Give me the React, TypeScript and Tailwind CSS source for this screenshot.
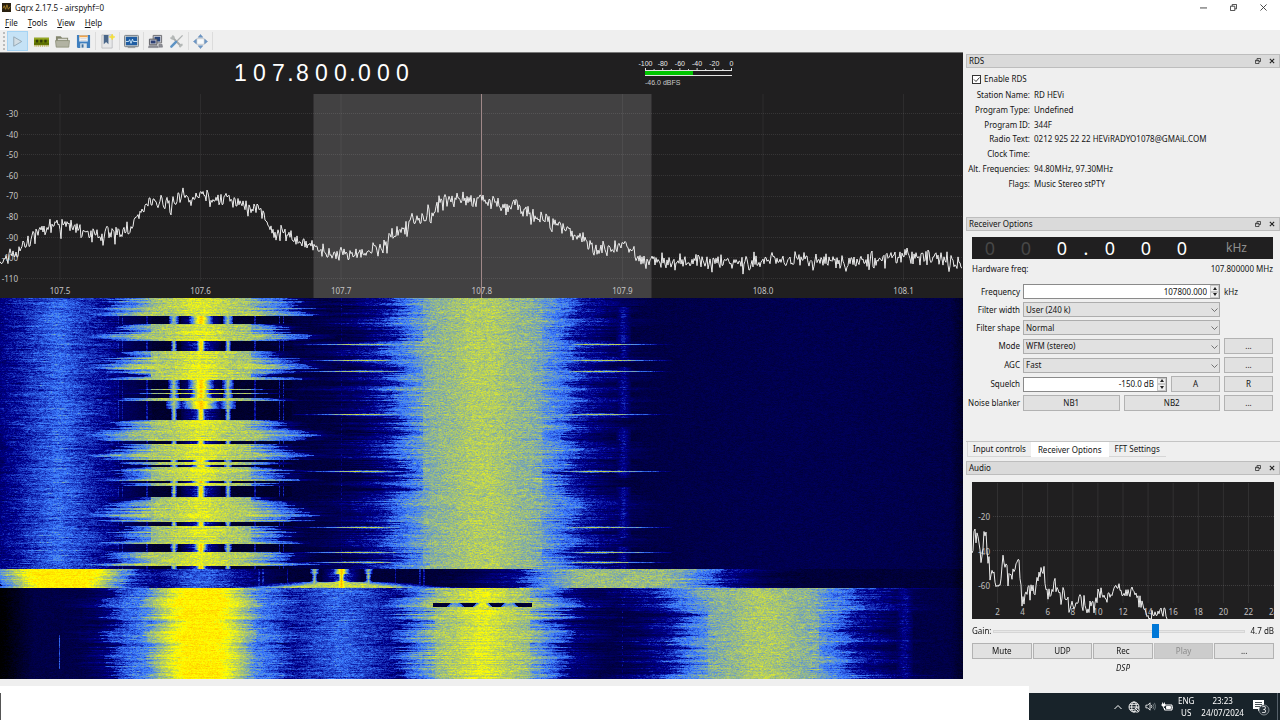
import { useLayoutEffect, useRef } from "react";
import type { ReactNode } from "react";

/* ---------- helpers ---------- */

function makeRandom(seed: number) {
  let a = seed;
  return () => {
    a = (a + 0x6d2b79f5) | 0;
    let t = Math.imul(a ^ (a >>> 15), 1 | a);
    t = (t + Math.imul(t ^ (t >>> 7), 61 | t)) ^ t;
    return ((t ^ (t >>> 14)) >>> 0) / 4294967296;
  };
}

type Point = [number, number];

function trace(points: Point[], noise: number, seed: number) {
  const rnd = makeRandom(seed);
  const out: string[] = [];
  for (let i = 0; i < points.length - 1; i++) {
    const [x0, y0] = points[i];
    const [x1, y1] = points[i + 1];
    for (let x = x0; x < x1; x++) {
      const y = y0 + ((y1 - y0) * (x - x0)) / (x1 - x0);
      let n = (rnd() + rnd() + rnd() - 1.5) * noise;
      if (rnd() < 0.07) n += noise * 0.9;
      out.push(`${x},${(y + n).toFixed(1)}`);
    }
  }
  return out.join(" ");
}

/* ---------- waterfall ---------- */

const WF_W = 963;
const WF_H = 381;

function colour(v: number): [number, number, number] {
  if (v < 20) return [0, 0, 0];
  if (v < 70) return [0, 0, (140 * (v - 20)) / 50];
  if (v < 100) return [(60 * (v - 70)) / 30, (125 * (v - 70)) / 30, (115 * (v - 70)) / 30 + 140];
  if (v < 150) return [(195 * (v - 100)) / 50 + 60, (130 * (v - 100)) / 50 + 125, 255 - (255 * (v - 100)) / 50];
  return [255, 255 - (255 * (Math.min(v, 250) - 150)) / 100, 0];
}

function lobe(d: number, core: number, edge: number, peak: number, floor = 45) {
  const a = Math.abs(d);
  if (a <= core) return peak;
  if (a >= edge) return 0;
  return peak - ((peak - floor) * (a - core)) / (edge - core);
}

// Silent passages of the 107.6 station: [first row, last row, glow of the carrier]
const GAPS: [number, number, number][] = [
  [18, 25, 9], [43, 52, 1], [82, 90, 10], [92, 94, 6], [96, 99, 8], [103, 110, 16], [111, 121, 1],
  [143, 145, 1], [162, 163, 6], [167, 168, 6], [183, 184, 6], [188, 198, 1], [224, 227, 1], [246, 251, 4], [252, 253, 1], [268, 270, 2],
];
const BURSTS = [46, 62, 73, 116, 173, 229, 254, 264];

function carriers(x: number, center: number, glow: number) {
  const d = Math.abs(x - center);
  let v = lobe(d, 0, glow + 3.5, 175, 70);
  v = Math.max(v, lobe(d, 6, 20, 76, 42));
  v = Math.max(v, lobe(d - 27, 0.4, 2.5 + glow / 3, 124, 70));
  if (Math.abs(d - 54) < 0.8) v = Math.max(v, 72);
  if (Math.abs(d - 78.5) < 0.8 || Math.abs(d - 82.5) < 0.8) v = Math.max(v, 75);
  return v;
}

function paintWaterfall(ctx: CanvasRenderingContext2D) {
  const rnd = makeRandom(1078);
  const noise = () => rnd() - 0.5;
  const img = ctx.createImageData(WF_W, WF_H);
  let slowA = 0;
  let slowB = 0;
  let slowC = 0;
  let midB = 0;
  let midC = 0;
  let midD = 0;
  let sinceGap = 20;
  for (let y = 0; y < WF_H; y++) {
    slowA = slowA * 0.9 + noise() * 0.35;
    slowB = slowB * 0.9 + noise() * 0.45;
    slowC = slowC * 0.93 + noise() * 0.45;
    midB = midB * 0.6 + noise() * 1.1;
    midC = midC * 0.55 + noise() * 1.1;
    midD = midD * 0.55 + noise() * 1.1;
    const ja = slowA * 0.5 + noise() * 0.4;
    const jb = slowB * 0.4 + midB * 0.6;
    const jbr = jb * 0.8 + noise() * 0.25;
    const jl = slowC * 0.5 + midC * 0.7;
    const jr = slowC * 0.4 + midC * 0.25 + midD * 0.5;
    const pk = noise() * 12;
    const gap = GAPS.find((g) => y >= g[0] && y <= g[1]);
    sinceGap = gap ? 0 : sinceGap + 1;
    const swell = 0.72 + Math.min(sinceGap, 14) * 0.022;
    const burst = BURSTS.some((b) => b === y);
    const halo = BURSTS.some((b) => Math.abs(b - y) === 1);
    let grain = 0;
    let streak = 0;
    for (let x = 0; x < WF_W; x++) {
      grain = grain * 0.3 + (rnd() + rnd() - 1) * 10;
      streak = streak * 0.93 + noise() * 7;
      let v: number;
      if (y < 271) {
        const base = x < 640 ? 42 : 44 + 4 * Math.sin((x - 640) / 110);
        v = base;
        v = Math.max(v, lobe(x - 58, 4, 60 + ja * 20, 95, 64), lobe(x - 62, 20, 112 + ja * 60, 74, 42));
        if (gap) {
          if (x > 108 && x < 292) v = Math.max(36, lobe(x - 58, 4, 60, 95, 64), lobe(x - 62, 20, 90, 74, 40), carriers(x, 200.5, gap[2]));
        } else {
          const s = x < 200 ? jb : jbr;
          const d = x - 200.5;
          v = Math.max(
            v,
            lobe(d, 4, 50, 141 + pk, 122),
            lobe(d, Math.max(6, (42 + s * 50) * swell), (94 + s * 52) * swell, 130 + pk * 0.6, 84),
            lobe(d, 40, (118 + s * 64) * swell, 98, 46),
          );
        }
        const j = x < 482 ? jl : jr;
        const d = x - 482;
        v = Math.max(
          v,
          lobe(d, 10, 60, 130, 116),
          lobe(d, 46 + j * 18, 92 + j * 30, 122 + pk * 0.4, 90),
          lobe(d, 66 + j * 20, 128 + j * 50, 96, 58),
          lobe(d, 90, 168 + j * 80, 68, 42),
        );
        const e = Math.abs(d);
        if (burst && e > 60) v = Math.max(v, lobe(e - 120, 16, 70, 128, 52));
        if (halo && e > 60) v = Math.max(v, lobe(e - 112, 8, 50, 86, 46));
        if (x > 482 && y % 60 > 8) v = Math.max(v, lobe(e - 141, 1, 8, 70, 48));
        if (x === 341 && y % 5 < 3) v = Math.max(v, 64);
      } else if (y < 290) {
        v = Math.max(
          40,
          lobe(x - 62, 28 + jb * 16, 70 + jb * 20, 157, 92),
          lobe(x - 90, 30, 118 + jb * 40, 88, 42),
          lobe(x - 200, 8, 82 + ja * 30, 92, 42),
          carriers(x, 341, y < 276 || y > 282 ? 5 : 0),
        );
        if (y > 283) v = Math.max(v, lobe(x - 341, (y - 283) * 8, 50 + (y - 283) * 13 + jb * 24, 134, 60));
        const j = x < 620 ? jl : jr;
        const d = x - 623;
        v = Math.max(v, lobe(d, 44 + j * 16, 92 + j * 30, 124, 90), lobe(d, 66, 126 + j * 44, 94, 56), lobe(d, 90, 160 + j * 60, 66, 42));
      } else {
        v = 18 + 27 * Math.min(1, x / 34);
        const s = x < 200 ? jb : jbr;
        v = Math.max(
          v,
          lobe(x - 201, Math.max(4, 17 + s * 18), 50 + s * 24, 157 + pk * 0.5, 114),
          lobe(x - 201, 30, 88 + s * 34, 120, 82),
          lobe(x - 201, 56, 120 + s * 50, 88, 45),
          lobe(x - 341, 6, 60 + ja * 30, 93, 70),
          lobe(x - 341, 30, 100, 72, 50),
        );
        const d = x - 482;
        const e = Math.abs(d);
        const k = y - 303;
        if (y >= 305 && y <= 308 && e < 50) {
          v = Math.max(38, lobe(e, k, 5 + k, 145, 90), lobe(e - 27, k, 4 + k, 116, 80));
        } else {
          const dip = y === 303 || y === 357 ? 0.5 : 1;
          v = Math.max(
            v,
            lobe(d, 4 * dip, 48, 142 + pk, 120),
            lobe(d, Math.max(5, 36 + s * 44) * dip, 82 + s * 44, 130 + pk * 0.6, 84),
            lobe(d, 40, 124 + s * 76, 96, 44),
          );
        }
        const j = x < 765 ? jl : jr;
        const f = x - 763;
        v = Math.max(
          v,
          lobe(f, 8, 56, 129, 115),
          lobe(f, 42 + j * 20, 92 + j * 34, 121 + pk * 0.3, 90),
          lobe(f, 64 + j * 20, 132 + j * 56, 95, 58),
          lobe(f, 90, 170 + j * 80, 68, 42),
          lobe(x - 904, 2, 9, 67, 48),
        );
        if (x === 59 && y > 336 && y < 371) v = 90;
        if (x === 622 && y % 6 < 3) v = Math.max(v, 64);
      }
      if (x > 950) v -= (x - 950) * 0.9;
      const skirt = v > 55 && v < 118 ? 0.8 : 0.3;
      const c = colour(v + grain * (v < 60 ? 0.6 : 1.1) + (v < 50 ? 0 : streak * skirt));
      const p = (y * WF_W + x) * 4;
      img.data[p] = c[0];
      img.data[p + 1] = c[1];
      img.data[p + 2] = c[2];
      img.data[p + 3] = 255;
    }
  }
  ctx.putImageData(img, 0, 0);
}

function Waterfall() {
  const ref = useRef<HTMLCanvasElement>(null);
  useLayoutEffect(() => {
    const ctx = ref.current?.getContext("2d");
    if (ctx) paintWaterfall(ctx);
  }, []);
  return <canvas ref={ref} width={WF_W} height={WF_H} aria-label="Waterfall" className="block h-[381px] w-full" />;
}

/* ---------- spectrum ---------- */

const PAN: Point[] = [
  [0, 172], [10, 163], [20, 154], [30, 147], [37, 138], [48, 134], [55, 129], [63, 130], [72, 135], [80, 137], [90, 142],
  [105, 141], [118, 139], [130, 134], [137, 121], [143, 121], [150, 107], [165, 108], [175, 106], [182, 102], [190, 106],
  [200, 103], [210, 104], [220, 106], [230, 104], [240, 110], [250, 114], [258, 116], [265, 125], [272, 139], [285, 141],
  [293, 147], [305, 152], [318, 153], [325, 163], [335, 162], [339, 162], [341, 153], [343, 160], [350, 164], [365, 159],
  [380, 155], [388, 147], [395, 142], [403, 138], [415, 125], [425, 124], [435, 117], [442, 108], [455, 107], [470, 109],
  [481, 106], [495, 108], [505, 113], [515, 112], [525, 116], [540, 123], [550, 128], [565, 136], [575, 143], [585, 150],
  [595, 155], [612, 156], [622, 153], [625, 146], [632, 162], [645, 167], [700, 168], [750, 169], [800, 167], [850, 168],
  [880, 166], [903, 162], [930, 165], [950, 169], [963, 173],
];

const AUDIO: Point[] = [
  [0, 74], [2, 50], [6, 54], [9, 77], [12, 52], [15, 67], [18, 94], [22, 90], [25, 104], [28, 102], [30, 80], [33, 82],
  [36, 95], [41, 90], [43, 86], [45, 76], [47, 80], [50, 117], [55, 113], [56, 99], [58, 114], [63, 110], [67, 90],
  [70, 85], [73, 102], [76, 117], [79, 114], [82, 102], [86, 114], [92, 110], [99, 123], [108, 119], [118, 127],
  [124, 122], [129, 110], [133, 119], [139, 109], [145, 104], [151, 110], [156, 113], [163, 110], [169, 117],
  [174, 132], [178, 138], [184, 129], [188, 129], [192, 123], [196, 138],
];

const pct = (n: number, total: number) => `${(n / total) * 100}%`;

function Spectrum() {
  return (
    <svg className="block h-[205px] w-full" role="img" aria-label="Spectrum">
      <rect x={pct(313.5, 963)} y="1" width={pct(338, 963)} height="204" fill="#424142" />
      {[60, 200.5, 341, 622.5, 763, 903.5].map((x) => (
        <line key={x} x1={pct(x, 963)} x2={pct(x, 963)} y1="1" y2="188" stroke="#fff" strokeOpacity=".06" />
      ))}
      {[20, 41, 61, 82, 103, 123, 144, 164, 185].map((y) => (
        <line key={y} x1="21" x2="100%" y1={y + 0.5} y2={y + 0.5} stroke="#fff" strokeOpacity=".1" strokeDasharray="1 1" />
      ))}
      <g fill="#c4c4c4" fontSize="8" fontFamily="'Noto Sans', sans-serif">
        {[30, 40, 50, 60, 70, 80, 90, 100, 110].map((n, i) => (
          <text key={n} x="18" y={24 + i * 20.6} textAnchor="end">{`-${n}`}</text>
        ))}
        {["107.5", "107.6", "107.7", "107.8", "107.9", "108.0", "108.1"].map((t, i) => (
          <text key={t} x={pct(60 + i * 140.6, 963)} y="201" textAnchor="middle">{t}</text>
        ))}
      </g>
      <line x1={pct(481.5, 963)} x2={pct(481.5, 963)} y1="1" y2="205" stroke="#a08888" />
      <svg width="100%" height="205" viewBox="0 0 963 205" preserveAspectRatio="none">
        <polyline points={trace(PAN, 7.5, 7)} fill="none" stroke="#ececec" strokeWidth="1" />
      </svg>
    </svg>
  );
}

function AudioSpectrum() {
  return (
    <svg className="block h-[137px] w-full bg-[#201f20]" role="img" aria-label="Audio spectrum">
      {Array.from({ length: 11 }, (_, i) => (
        <line key={i} x1={pct(25.5 + i * 25.1, 302)} x2={pct(25.5 + i * 25.1, 302)} y1="1" y2="121" stroke="#fff" strokeOpacity=".08" />
      ))}
      {[34.5, 68.5, 103.5].map((y) => (
        <line key={y} x1="21" x2="100%" y1={y} y2={y} stroke="#fff" strokeOpacity=".14" strokeDasharray="1 1" />
      ))}
      <g fill="#c0c0c0" fontSize="8" fontFamily="'Noto Sans', sans-serif">
        {["-20", "-40", "-60"].map((t, i) => (
          <text key={t} x="18" y={38 + i * 34.5} textAnchor="end">{t}</text>
        ))}
        {Array.from({ length: 12 }, (_, i) => (
          <text key={i} x={pct(25.5 + i * 25.1, 302)} y="133" textAnchor="middle">{String((i + 1) * 2)}</text>
        ))}
      </g>
      <svg width="100%" height="137" viewBox="0 0 302 137" preserveAspectRatio="none">
        <polyline points={trace(AUDIO, 9, 21)} fill="none" stroke="#ececec" strokeWidth="1" />
      </svg>
    </svg>
  );
}

function Meter() {
  return (
    <svg className="h-[32px] w-[106px]" viewBox="0 0 106 32" role="img" aria-label="Signal level">
      <g fill="#e8e8e8" fontSize="7" fontFamily="'Liberation Sans', sans-serif">
        {["-100", "-80", "-60", "-40", "-20", "0"].map((t, i) => (
          <text key={t} x={10.5 + i * 17.2} y="8" textAnchor="middle">{t}</text>
        ))}
        <text x="10" y="27" fill="#c9c9c9">-46.0 dBFS</text>
      </g>
      {Array.from({ length: 11 }, (_, i) => (
        <line key={i} x1={10.5 + i * 8.6} x2={10.5 + i * 8.6} y1={i % 2 ? 11 : 10} y2="13" stroke="#ddd" />
      ))}
      <path d="M10 12.5h87M10 17.5h87" stroke="#e4e4e4" />
      <rect x="10" y="13" width="48" height="4" fill="#00c400" />
    </svg>
  );
}

/* ---------- icons ---------- */

function Glyph({ children }: { children: ReactNode }) {
  return <svg viewBox="0 0 16 16" className="size-[15px]" aria-hidden="true">{children}</svg>;
}

const icons: Record<string, ReactNode> = {
  play: <path d="M4 3l8.500 5L4 13z" fill="#d2dde4" stroke="#93a7b4" strokeWidth="1" />,
  card: (
    <>
      <path d="M0 4h16v8H0z" fill="#6d8200" />
      <path d="M0 4h16v2H0z" fill="#96a825" />
      <path d="M2 6h2.500v3H2zM6.500 6H9v3H6.500zM11 6h2.500v3H11z" fill="#333b08" />
      <path d="M1 12v1.500M3 12v1.500M5 12v1.500M7 12v1.500M9 12v1.500M11 12v1.500M13 12v1.500M15 12v1.500" stroke="#b3a03a" />
      <path d="M0 10.500h16" stroke="#515f05" />
    </>
  ),
  folder: (
    <>
      <path d="M1 2.500h5l1.500 1.500H14V13H1z" fill="#84866f" />
      <path d="M3 5h10v2H3z" fill="#dcdcd4" />
      <path d="M.5 7h15l-.8 7H1.300z" fill="#b2b3a3" stroke="#84866f" strokeWidth=".7" />
    </>
  ),
  save: (
    <>
      <path d="M1 1h14v14H2l-1-1z" fill="#3f7fbf" />
      <path d="M3.500 1.500h9V8h-9z" fill="#fff" />
      <path d="M3.500 1.500h9V3.500h-9z" fill="#f0a44c" />
      <path d="M4.500 5h7M4.500 6.800h7" stroke="#b9bec4" strokeWidth=".7" />
      <path d="M4.500 10h7v5h-7z" fill="#dde4ea" />
      <path d="M6 11h2v3.500H6z" fill="#3d6e9e" />
    </>
  ),
  bookmark: (
    <>
      <path d="M2 1h11v14H2z" fill="#e7e8e9" stroke="#b4b7ba" strokeWidth=".8" />
      <path d="M4 1h5v10L6.500 8.500 4 11z" fill="#4a6689" />
      <path d="M13 0l.9 2.300 2.100.8-2.100.9-.9 2.300-.9-2.300-2.400-.9 2.400-.8z" fill="#f5df36" stroke="#f5df36" strokeWidth=".6" />
    </>
  ),
  monitor: (
    <>
      <rect x=".5" y="1.500" width="15" height="12" rx="1" fill="#c9ccca" stroke="#747d84" />
      <path d="M2 3h12v9H2z" fill="#1f5da3" />
      <path d="M2 8h3l1-2 1.500 4L9 5.500l1 2.500h4" fill="none" stroke="#d8f1ff" strokeWidth=".9" />
      <path d="M4 14.500h8" stroke="#8f9696" />
    </>
  ),
  network: (
    <>
      <path d="M5.500 1.500h9v8h-9z" fill="#cfd0d4" stroke="#6b6b70" />
      <path d="M7 3h6v5H7z" fill="#27457c" />
      <path d="M1.500 5.500h8v6h-8z" fill="#b9bcc6" stroke="#5b5b60" />
      <path d="M3 7h5v3H3z" fill="#2d3f74" />
      <path d="M1 12.500h9l1 2H.5zM11.500 11h3.500l.5 3h-4z" fill="#8e8f97" stroke="#62636b" strokeWidth=".5" />
    </>
  ),
  tools: (
    <>
      <path d="M3.500 3.500l9 9" stroke="#a5a9a9" strokeWidth="2" strokeLinecap="round" />
      <path d="M1 3.500A3 3 0 0 0 5 6l1-1A3 3 0 0 0 3.500 1v2L2.500 4zM14.500 10.500a3 3 0 0 0-4 2.500l1.500 2 .5-2 2-.5z" fill="#b3b7b6" />
      <path d="M14.500 1.500L8 8" stroke="#b0b3b3" strokeWidth="1.400" />
      <path d="M7.500 8.500L2.500 13.500" stroke="#5e93c4" strokeWidth="2.600" strokeLinecap="round" />
    </>
  ),
  expand: (
    <>
      <path d="M4 5h8v6H4z" fill="#f8fafb" stroke="#b6bec6" strokeWidth=".8" />
      <path d="M8 .5l2.500 3h-5zM8 15.500l2.500-3h-5zM.5 8l3-2.500v5zM15.500 8l-3-2.500v5z" fill="#6f9aca" stroke="#557fae" strokeWidth=".5" />
    </>
  ),
};

function ToolButton({ icon, label, active }: { icon: string; label: string; active?: boolean }) {
  return (
    <button
      type="button"
      aria-label={label}
      className={
        active
          ? "flex h-[20px] w-[21px] items-center justify-center border border-[#a5d3f3] bg-[#c5e2f6]"
          : "flex h-[20px] w-[21px] items-center justify-center"
      }
    >
      <Glyph>{icons[icon]}</Glyph>
    </button>
  );
}

const ToolSep = () => <div className="mx-px h-[18px] w-px bg-[#dcdcdc]" />;

/* ---------- dock widgets ---------- */

function DockTitle({ children }: { children: ReactNode }) {
  return (
    <div className="flex h-[14px] items-center border border-[#bdbdbd] bg-[#dadada] pr-[4px] pl-[2px]">
      <h2 className="flex-1">{children}</h2>
      <button type="button" aria-label="Float" className="mr-[8px]">
        <svg viewBox="0 0 12 12" className="size-[6px]" fill="none" stroke="#333" strokeWidth="1.600">
          <path d="M4 4V1h7v6H8" />
          <path d="M1 4.500h7V11H1zM1 5.500h7" />
        </svg>
      </button>
      <button type="button" aria-label="Close">
        <svg viewBox="0 0 7 7" className="size-[6px]" stroke="#222" strokeWidth="1.300">
          <path d="M1 1l5 5M6 1L1 6" />
        </svg>
      </button>
    </div>
  );
}

function PushButton({ children, className = "", disabled }: { children: ReactNode; className?: string; disabled?: boolean }) {
  return (
    <button
      type="button"
      disabled={disabled}
      className={`flex h-[16px] items-center justify-center border border-[#b2b2b2] bg-[#e1e1e1] disabled:border-[#c2c2c2] disabled:bg-[#cccccc] disabled:text-[#8b8b8b] ${className}`}
    >
      {children}
    </button>
  );
}

function Spin({ id, value }: { id: string; value: string }) {
  return (
    <div className="flex h-[15px] w-full border border-[#8a8a8a] bg-white">
      <input id={id} defaultValue={value} className="w-full min-w-0 flex-1 px-[3px] text-right outline-none" />
      <div className="flex w-[9px] flex-col bg-[#efefef]">
        <button type="button" aria-label="Increase" className="flex flex-1 items-center justify-center border border-[#c8c8c8]">
          <svg viewBox="0 0 4 3" className="h-[3px] w-[4px]"><path d="M0 3l2-3 2 3z" fill="#222" /></svg>
        </button>
        <button type="button" aria-label="Decrease" className="flex flex-1 items-center justify-center border border-[#c8c8c8]">
          <svg viewBox="0 0 4 3" className="h-[3px] w-[4px]"><path d="M0 0l2 3 2-3z" fill="#222" /></svg>
        </button>
      </div>
    </div>
  );
}

function Combo({ id, value }: { id: string; value: string }) {
  return (
    <div className="relative">
      <select id={id} className="block h-[15px] w-full appearance-none border border-[#adadad] bg-[#e1e1e1] pl-[2px] outline-none">
        <option>{value}</option>
      </select>
      <svg viewBox="0 0 7 4" className="pointer-events-none absolute top-[6px] right-[2px] h-[4px] w-[7px]" fill="none" stroke="#555" strokeWidth=".8">
        <path d="M.5.5l3 3 3-3" />
      </svg>
    </div>
  );
}

function Row({ id, label, children, extra }: { id: string; label: string; children: ReactNode; extra?: ReactNode }) {
  return (
    <div className="grid grid-cols-[48px_1fr_49px] items-center">
      <label htmlFor={id} className="flex justify-end whitespace-nowrap">{label}</label>
      <div className="mr-[4px] ml-[3px]">{children}</div>
      {extra}
    </div>
  );
}

const rds: [string, string][] = [
  ["Station Name:", "RD HEVi"],
  ["Program Type:", "Undefined"],
  ["Program ID:", "344F"],
  ["Radio Text:", "0212 925 22 22 HEViRADYO1078@GMAiL.COM"],
  ["Clock Time:", ""],
  ["Alt. Frequencies:", "94.80MHz, 97.30MHz"],
  ["Flags:", "Music Stereo stPTY"],
];

/* ---------- page ---------- */

export default function App() {
  return (
    <div className="flex min-h-screen flex-col bg-[#efefef] font-['Noto_Sans',sans-serif] text-[8px] leading-[12px] text-[#141414]">
      <header className="bg-white">
        <div className="flex h-[15px] items-center">
          <svg viewBox="0 0 10 10" className="ml-[2px] size-[9px]" aria-hidden="true">
            <rect width="10" height="10" fill="#2a2110" />
            <path d="M1 6l1.500-3L4 7l1.500-5L7 7l2-3" fill="none" stroke="#b58a2a" strokeWidth=".9" />
          </svg>
          <h1 className="ml-[4px] flex-1">Gqrx 2.17.5 - airspyhf=0</h1>
          <div className="flex items-center gap-[23px] pr-[13px]">
            <button type="button" aria-label="Minimize">
              <svg viewBox="0 0 8 8" className="size-[7px]" stroke="#333"><path d="M0 4.500h8" /></svg>
            </button>
            <button type="button" aria-label="Restore">
              <svg viewBox="0 0 8 8" className="size-[7px]" fill="none" stroke="#333"><path d="M.5 2.500h5v5h-5zM2.500 2.500v-2h5v5h-2" /></svg>
            </button>
            <button type="button" aria-label="Close window">
              <svg viewBox="0 0 8 8" className="size-[7px]" stroke="#333"><path d="M.5.5l7 7M7.500.5l-7 7" /></svg>
            </button>
          </div>
        </div>
        <nav className="flex h-[15px] items-center gap-[10px] pl-[5px]">
          {["File", "Tools", "View", "Help"].map((m) => (
            <button key={m} type="button"><span className="underline">{m[0]}</span>{m.slice(1)}</button>
          ))}
        </nav>
      </header>

      <div className="flex h-[22px] items-center pl-[3px]">
        <div className="mr-[2px] h-[18px] w-[2px] border-l-2 border-dotted border-[#bcbcbc]" />
        <ToolButton icon="play" label="Start DSP" active />
        <div className="w-[3px]" />
        <ToolButton icon="card" label="Configure device" />
        <ToolButton icon="folder" label="Load settings" />
        <ToolButton icon="save" label="Save settings" />
        <ToolSep />
        <ToolButton icon="bookmark" label="Add bookmark" />
        <ToolSep />
        <ToolButton icon="monitor" label="Record I/Q" />
        <ToolSep />
        <ToolButton icon="network" label="Remote control" />
        <ToolButton icon="tools" label="Remote settings" />
        <ToolSep />
        <ToolButton icon="expand" label="Full screen" />
        <ToolSep />
      </div>

      <main className="flex flex-1">
        <section className="flex min-w-0 flex-1 flex-col border-t border-[#777]">
          <div className="bg-[#201f20]">
            <div className="flex h-[40px] items-start pl-[231px]">
              <div className="mt-[6px] flex font-['Liberation_Sans',sans-serif] text-[23px] leading-[28px] text-white">
                {"107.800.000".split("").map((c, i) => (
                  <span key={i} className={c === "." ? "flex w-[5px] justify-center" : "flex w-[19px] justify-center"}>{c}</span>
                ))}
              </div>
              <div className="mt-[5px] ml-[223px]"><Meter /></div>
            </div>
            <Spectrum />
          </div>
          <Waterfall />
        </section>

        <aside className="w-[317px] pl-[3px]">
          <div className="h-[163px] pt-[2px]">
            <DockTitle>RDS</DockTitle>
            <div className="pt-[5px] pl-[6px]">
              <label className="flex items-center gap-[3px]">
                <span className="relative flex">
                  <input type="checkbox" defaultChecked className="peer size-[9px] appearance-none border border-[#333] bg-white" />
                  <svg
                    viewBox="0 0 9 9"
                    className="pointer-events-none absolute inset-0 hidden size-[9px] peer-checked:block"
                    fill="none"
                    stroke="#222"
                    strokeWidth=".9"
                  >
                    <path d="M2 4.500l2 2 3.500-4" />
                  </svg>
                </span>
                Enable RDS
              </label>
              <dl className="mt-[3px] grid h-[103px] grid-cols-[58px_1fr] grid-rows-7 items-center gap-x-[4px]">
                {rds.map(([k, v]) => (
                  <div key={k} className="contents">
                    <dt className="flex justify-end whitespace-nowrap">{k}</dt>
                    <dd className="whitespace-nowrap">{v}</dd>
                  </div>
                ))}
              </dl>
            </div>
          </div>

          <div className="h-[226px] pt-[2px]">
            <DockTitle>Receiver Options</DockTitle>
            <div className="pt-[6px] pr-[7px] pl-[6px]">
              <div className="flex h-[22px] items-center bg-[#201f20] text-[18px] leading-[22px] text-white">
                {"000.000".split("").map((c, i) => (
                  <span
                    key={i}
                    className={
                      c === "."
                        ? "flex w-[12px] justify-center"
                        : i < 2
                          ? "flex w-[36px] justify-center text-[#474747]"
                          : "flex w-[36px] justify-center"
                    }
                  >
                    {c}
                  </span>
                ))}
                <span className="flex-1 text-center text-[12px] text-[#8f8f8f]">kHz</span>
              </div>
              <div className="mt-[4px] flex justify-between"><span>Hardware freq:</span><span>107.800000 MHz</span></div>
              <form className="mt-[9px] flex flex-col gap-[3px]">
                <Row id="freq" label="Frequency" extra={<span>kHz</span>}><Spin id="freq" value="107800.000" /></Row>
                <Row id="fw" label="Filter width"><Combo id="fw" value="User (240 k)" /></Row>
                <Row id="fs" label="Filter shape"><Combo id="fs" value="Normal" /></Row>
                <Row id="mode" label="Mode" extra={<PushButton>...</PushButton>}><Combo id="mode" value="WFM (stereo)" /></Row>
                <Row id="agc" label="AGC" extra={<PushButton>...</PushButton>}><Combo id="agc" value="Fast" /></Row>
                <Row id="sql" label="Squelch" extra={<PushButton>R</PushButton>}>
                  <div className="flex items-center gap-[4px]">
                    <Spin id="sql" value="-150.0 dB" />
                    <PushButton className="w-[49px] shrink-0">A</PushButton>
                  </div>
                </Row>
                <Row id="nb" label="Noise blanker" extra={<PushButton>...</PushButton>}>
                  <div className="grid grid-cols-2 gap-[4px]"><PushButton>NB1</PushButton><PushButton>NB2</PushButton></div>
                </Row>
              </form>
            </div>
          </div>

          <div role="tablist" className="flex h-[16px] border-t border-[#c4c4c4] pl-px">
            <button role="tab" type="button" className="border-b border-l border-[#d6d6d6] px-[5px]">Input controls</button>
            <button role="tab" type="button" aria-selected="true" className="bg-white px-[7px]">Receiver Options</button>
            <button role="tab" type="button" className="border-b border-[#d6d6d6] px-[6px]">FFT Settings</button>
          </div>

          <div className="mt-[4px]">
            <DockTitle>Audio</DockTitle>
            <div className="pt-[7px] pr-[6px] pl-[6px]">
              <AudioSpectrum />
              <div className="mt-[4px] flex h-[16px] items-center">
                <label htmlFor="gain" className="w-[21px]">Gain:</label>
                <input
                  id="gain"
                  type="range"
                  min="0"
                  max="100"
                  defaultValue="65"
                  className="h-[14px] min-w-0 flex-1 appearance-none bg-transparent [&::-webkit-slider-runnable-track]:h-[3px] [&::-webkit-slider-runnable-track]:border [&::-webkit-slider-runnable-track]:border-[#d6d6d6] [&::-webkit-slider-runnable-track]:bg-[#e7e7e7] [&::-webkit-slider-thumb]:-mt-[7px] [&::-webkit-slider-thumb]:h-[14px] [&::-webkit-slider-thumb]:w-[7px] [&::-webkit-slider-thumb]:appearance-none [&::-webkit-slider-thumb]:bg-[#0078d7]"
                />
                <output htmlFor="gain" className="w-[29px] text-right">4.7 dB</output>
              </div>
              <div className="mt-[4px] grid grid-cols-5 gap-px">
                <PushButton>Mute</PushButton>
                <PushButton>UDP</PushButton>
                <PushButton>Rec</PushButton>
                <PushButton disabled>Play</PushButton>
                <PushButton>...</PushButton>
              </div>
              <p className="mt-[3px] text-center italic">DSP</p>
            </div>
          </div>
        </aside>
      </main>

      <footer className="flex h-[41px]">
        <div className="mt-[7px] flex flex-1 items-end bg-white"><div className="h-[27px] w-px bg-[#555]" /></div>
        <div className="mt-[14px] flex w-[251px] items-center bg-[#18232a] text-white">
          <div className="ml-[84px] flex items-center gap-[5px]">
            <svg viewBox="0 0 10 10" className="size-[10px]" fill="none" stroke="#fff"><path d="M1.500 7L5 3.500 8.500 7" /></svg>
            <svg viewBox="0 0 12 12" className="size-[12px]" fill="none" stroke="#fff" strokeWidth=".9">
              <circle cx="6" cy="6" r="5" /><ellipse cx="6" cy="6" rx="2.300" ry="5" /><path d="M1 6h10M2 3.300h8M2 8.700h4" />
              <circle cx="9" cy="9" r="2.200" fill="#18232a" /><path d="M7.500 7.500l3 3" />
            </svg>
            <svg viewBox="0 0 12 12" className="size-[11px]" fill="none" stroke="#fff" strokeWidth=".9">
              <path d="M1 4.500h2L5.500 2v8L3 7.500H1zM7 4.500q1 1.500 0 3" /><path d="M8.700 3.200q2 2.800 0 5.600M10.300 2q2.600 4 0 8" stroke="#7c858a" />
            </svg>
            <svg viewBox="0 0 12 12" className="size-[12px]" fill="none" stroke="#fff">
              <path d="M4 4h7v5H3.500V7" /><path d="M5.500 5.500h4v2h-4z" fill="#fff" /><path d="M11.700 5.500v2" /><path d="M1 3h3v2H1zM1.500 1.500V3M3.500 1.500V3M2.500 5v2.500" fill="#fff" strokeWidth=".8" />
            </svg>
          </div>
          <div className="ml-[5px] text-center leading-[12px]"><div>ENG</div><div>US</div></div>
          <div className="ml-[7px] text-center leading-[12px]"><div>23:23</div><div>24/07/2024</div></div>
          <svg viewBox="0 0 18 18" className="ml-[8px] size-[18px]">
            <path d="M1 2h11v9H8l-2 2.500V11H1z" fill="#fff" />
            <path d="M3 4.500h7M3 6.500h7M3 8.500h5" stroke="#18232a" strokeWidth=".8" />
            <circle cx="12" cy="12" r="5" fill="#28323a" stroke="#9aa1a5" strokeWidth=".8" />
            <text x="12" y="15" textAnchor="middle" fontSize="8" fill="#fff">3</text>
          </svg>
          <div className="mr-[2px] ml-auto h-full w-px bg-[#56616a]" />
        </div>
      </footer>
    </div>
  );
}
